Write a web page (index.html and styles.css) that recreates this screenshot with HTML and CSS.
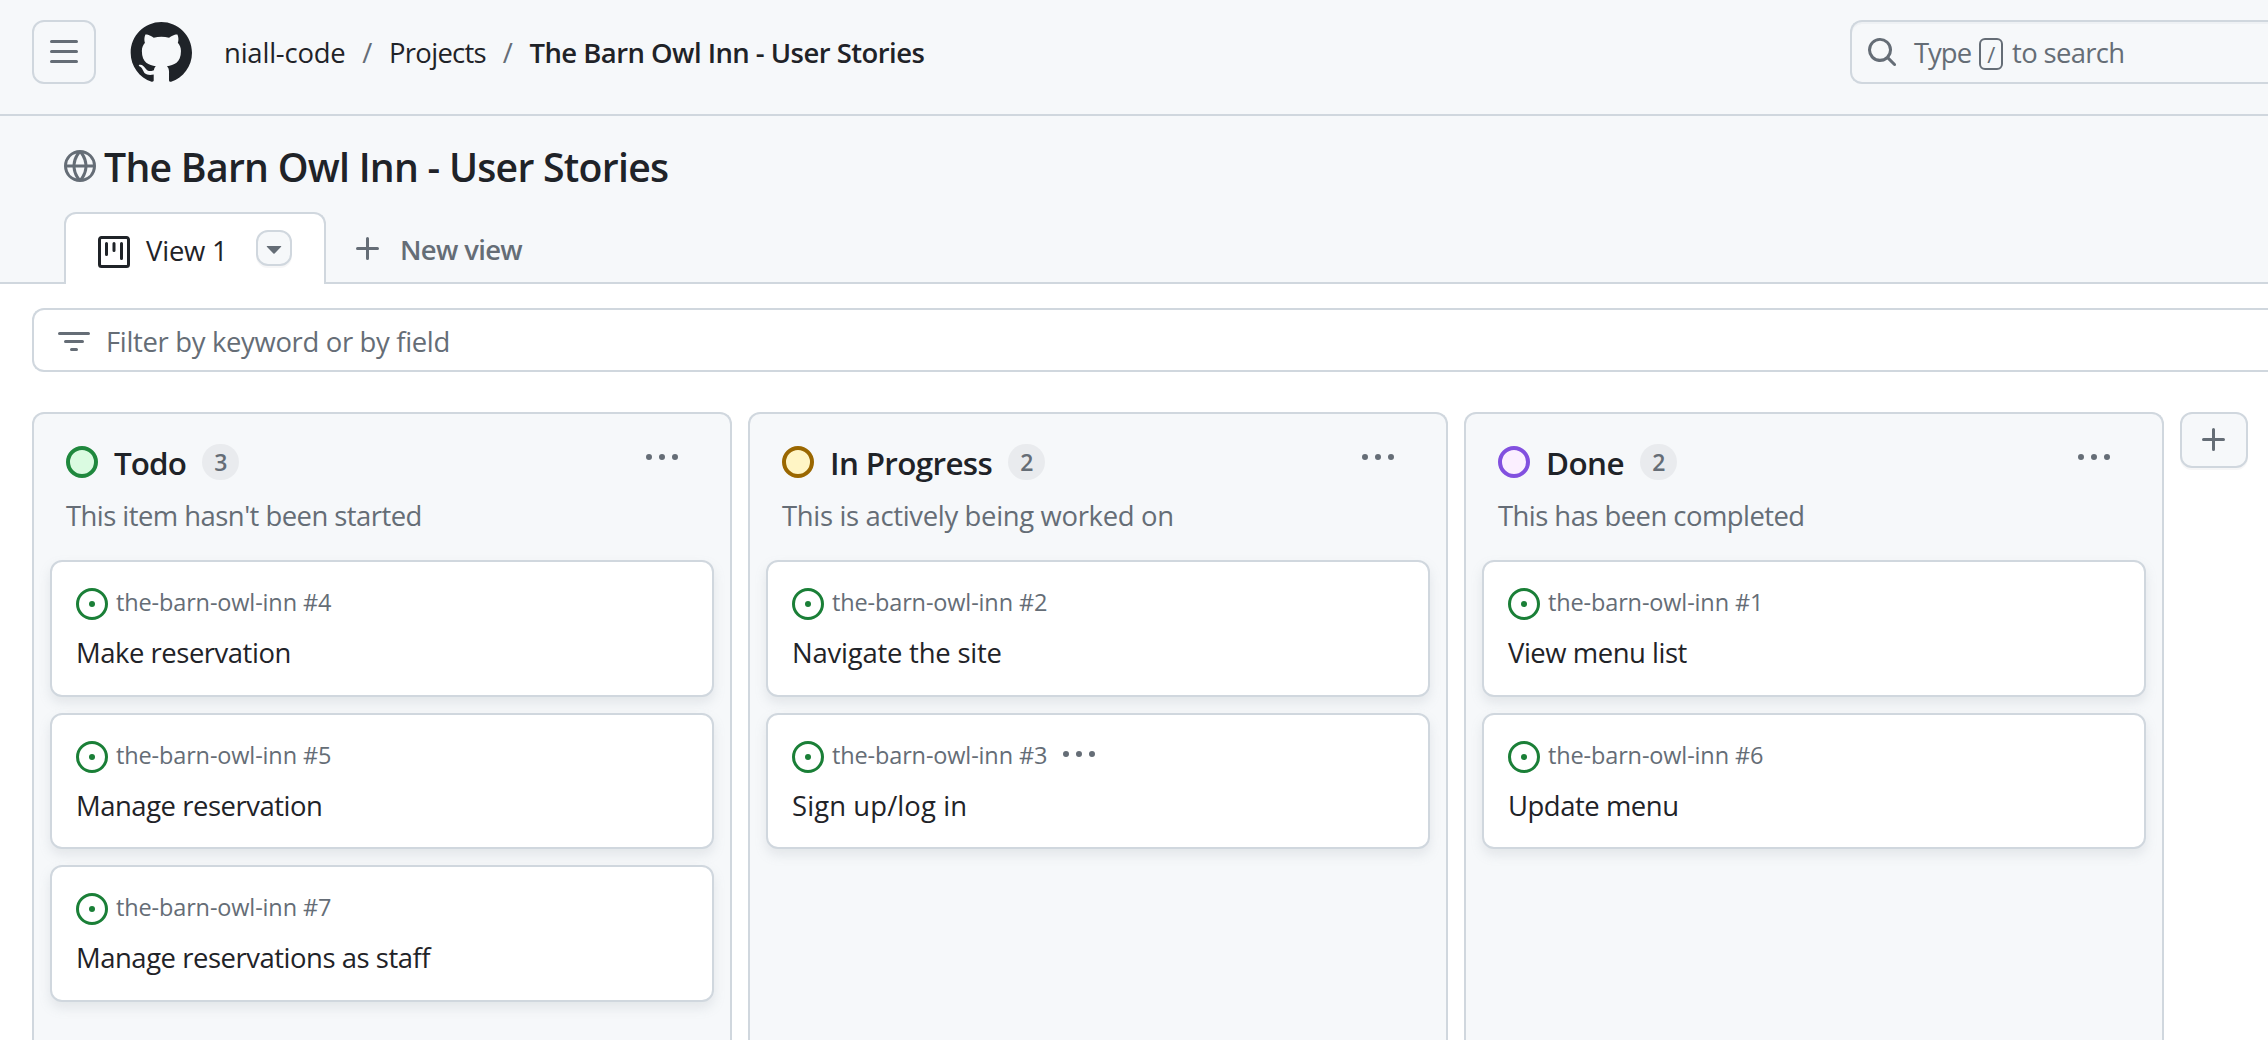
FILE: index.html
```html
<!DOCTYPE html>
<html lang="en">
<head>
<meta charset="utf-8">
<title>The Barn Owl Inn - User Stories</title>
<link rel="stylesheet" href="styles.css">
</head>
<body>
<svg class="sprite" aria-hidden="true">
  <symbol id="plus" viewBox="0 0 16 16"><path d="M7.75 2a.75.75 0 0 1 .75.75V7h4.25a.75.75 0 0 1 0 1.5H8.5v4.25a.75.75 0 0 1-1.5 0V8.5H2.75a.75.75 0 0 1 0-1.5H7V2.75A.75.75 0 0 1 7.75 2Z"/></symbol>
  <symbol id="kebab" viewBox="0 0 16 16"><path d="M8 9a1.5 1.5 0 1 0 0-3 1.5 1.5 0 0 0 0 3ZM1.5 9a1.5 1.5 0 1 0 0-3 1.5 1.5 0 0 0 0 3Zm13 0a1.5 1.5 0 1 0 0-3 1.5 1.5 0 0 0 0 3Z"/></symbol>
  <symbol id="issue" viewBox="0 0 16 16"><path d="M8 9.5a1.5 1.5 0 1 0 0-3 1.5 1.5 0 0 0 0 3Z"/><path d="M8 0a8 8 0 1 1 0 16A8 8 0 0 1 8 0ZM1.5 8a6.5 6.5 0 1 0 13 0 6.5 6.5 0 0 0-13 0Z"/></symbol>
</svg>

<header class="topbar">
  <button class="menu-button" aria-label="Menu"><svg class="icon" viewBox="0 0 16 16"><path d="M1 2.75A.75.75 0 0 1 1.75 2h12.5a.75.75 0 0 1 0 1.5H1.75A.75.75 0 0 1 1 2.75Zm0 5A.75.75 0 0 1 1.75 7h12.5a.75.75 0 0 1 0 1.5H1.75A.75.75 0 0 1 1 7.75ZM1.75 12h12.5a.75.75 0 0 1 0 1.5H1.75a.75.75 0 0 1 0-1.5Z"/></svg></button>
  <svg class="logo" viewBox="0 0 24 24"><path d="M12.5.75C6.146.75 1 5.896 1 12.25c0 5.089 3.292 9.387 7.863 10.91.575.101.79-.244.79-.546 0-.273-.014-1.178-.014-2.142-2.889.532-3.636-.704-3.866-1.35-.13-.331-.69-1.352-1.18-1.625-.402-.216-.977-.748-.014-.762.906-.014 1.553.834 1.769 1.179 1.035 1.74 2.688 1.25 3.349.948.1-.747.402-1.25.733-1.538-2.559-.287-5.232-1.279-5.232-5.678 0-1.25.445-2.285 1.178-3.09-.115-.288-.517-1.467.115-3.048 0 0 .963-.302 3.163 1.179.92-.259 1.897-.388 2.875-.388.977 0 1.955.13 2.875.388 2.2-1.495 3.162-1.179 3.162-1.179.633 1.581.23 2.76.115 3.048.733.805 1.179 1.825 1.179 3.09 0 4.413-2.688 5.39-5.247 5.678.417.36.776 1.05.776 2.128 0 1.538-.014 2.774-.014 3.162 0 .302.216.662.79.547C20.709 21.637 24 17.324 24 12.25 24 5.896 18.854.75 12.5.75Z"/></svg>
  <nav class="crumbs">
    <span class="owner">niall-code</span><span class="slash">/</span><span class="projects">Projects</span><span class="slash">/</span><strong class="current">The Barn Owl Inn - User Stories</strong>
  </nav>
  <div class="search">
    <svg class="icon" viewBox="0 0 16 16"><path d="M10.68 11.74a6 6 0 0 1-7.922-8.982 6 6 0 0 1 8.982 7.922l3.04 3.04a.749.749 0 0 1-.326 1.275.749.749 0 0 1-.734-.215ZM11.5 7a4.499 4.499 0 1 0-8.997 0A4.499 4.499 0 0 0 11.5 7Z"/></svg>
    <span class="search-type">Type</span><kbd class="key">/</kbd><span class="search-rest">to search</span>
  </div>
</header>

<section class="project-head">
  <div class="title-row">
    <svg class="icon" viewBox="0 0 16 16"><path d="M8 0a8 8 0 1 1 0 16A8 8 0 0 1 8 0ZM5.78 8.75a9.64 9.64 0 0 0 1.363 4.177c.255.426.542.832.857 1.215.245-.296.551-.705.857-1.215A9.64 9.64 0 0 0 10.22 8.75Zm4.44-1.5a9.64 9.64 0 0 0-1.363-4.177c-.307-.51-.612-.919-.857-1.215a9.927 9.927 0 0 0-.857 1.215A9.64 9.64 0 0 0 5.78 7.25Zm-5.944 1.5H1.543a6.507 6.507 0 0 0 4.666 5.5c-.123-.181-.24-.365-.352-.552-.715-1.192-1.437-2.874-1.581-4.948Zm-2.733-1.5h2.733c.144-2.074.866-3.756 1.58-4.948.12-.197.237-.381.353-.552a6.507 6.507 0 0 0-4.666 5.5Zm10.181 1.5c-.144 2.074-.866 3.756-1.58 4.948-.12.197-.237.381-.353.552a6.507 6.507 0 0 0 4.666-5.5Zm2.733-1.5a6.507 6.507 0 0 0-4.666-5.5c.123.181.24.365.353.552.714 1.192 1.436 2.874 1.58 4.948Z"/></svg>
    <h1>The Barn Owl Inn - User Stories</h1>
  </div>
  <div class="tabs">
    <div class="tab">
      <svg class="icon dark" viewBox="0 0 16 16"><path d="M1.75 0h12.5C15.216 0 16 .784 16 1.75v12.5A1.75 1.75 0 0 1 14.25 16H1.75A1.75 1.75 0 0 1 0 14.25V1.75C0 .784.784 0 1.75 0ZM1.5 1.75v12.5c0 .138.112.25.25.25h12.5a.25.25 0 0 0 .25-.25V1.75a.25.25 0 0 0-.25-.25H1.75a.25.25 0 0 0-.25.25ZM11.75 3a.75.75 0 0 1 .75.75v7.5a.75.75 0 0 1-1.5 0v-7.5a.75.75 0 0 1 .75-.75Zm-8.25.75a.75.75 0 0 1 1.5 0v5.5a.75.75 0 0 1-1.5 0ZM8 3a.75.75 0 0 1 .75.75v3.5a.75.75 0 0 1-1.5 0v-3.5A.75.75 0 0 1 8 3Z"/></svg>
      <span class="tab-name">View 1</span>
      <button class="tab-menu" aria-label="View options"><svg class="icon" viewBox="0 0 16 16"><path d="m4.427 7.427 3.396 3.396a.25.25 0 0 0 .354 0l3.396-3.396A.25.25 0 0 0 11.396 7H4.604a.25.25 0 0 0-.177.427Z"/></svg></button>
    </div>
    <div class="new-view"><svg class="icon"><use href="#plus"/></svg><span>New view</span></div>
  </div>
</section>

<div class="filter">
  <svg class="icon" viewBox="0 0 16 16"><path d="M.75 3h14.5a.75.75 0 0 1 0 1.5H.75a.75.75 0 0 1 0-1.5ZM3 7.75A.75.75 0 0 1 3.75 7h8.5a.75.75 0 0 1 0 1.5h-8.5A.75.75 0 0 1 3 7.75Zm3 4a.75.75 0 0 1 .75-.75h2.5a.75.75 0 0 1 0 1.5h-2.5a.75.75 0 0 1-.75-.75Z"/></svg>
  <span>Filter by keyword or by field</span>
</div>

<main class="board">
  <section class="column todo">
    <div class="column-head"><i class="dot"></i><h2>Todo</h2><span class="count">3</span><svg class="icon more"><use href="#kebab"/></svg></div>
    <p class="desc">This item hasn't been started</p>
    <article class="card"><div class="ref"><svg class="icon open"><use href="#issue"/></svg><span>the-barn-owl-inn #4</span></div><h3>Make reservation</h3></article>
    <article class="card"><div class="ref"><svg class="icon open"><use href="#issue"/></svg><span>the-barn-owl-inn #5</span></div><h3>Manage reservation</h3></article>
    <article class="card"><div class="ref"><svg class="icon open"><use href="#issue"/></svg><span>the-barn-owl-inn #7</span></div><h3>Manage reservations as staff</h3></article>
  </section>
  <section class="column progress">
    <div class="column-head"><i class="dot"></i><h2>In Progress</h2><span class="count">2</span><svg class="icon more"><use href="#kebab"/></svg></div>
    <p class="desc">This is actively being worked on</p>
    <article class="card"><div class="ref"><svg class="icon open"><use href="#issue"/></svg><span>the-barn-owl-inn #2</span></div><h3 class="loose">Navigate the site</h3></article>
    <article class="card"><div class="ref"><svg class="icon open"><use href="#issue"/></svg><span>the-barn-owl-inn #3</span><svg class="icon card-more"><use href="#kebab"/></svg></div><h3 class="looser">Sign up/log in</h3></article>
  </section>
  <section class="column done">
    <div class="column-head"><i class="dot"></i><h2>Done</h2><span class="count">2</span><svg class="icon more"><use href="#kebab"/></svg></div>
    <p class="desc">This has been completed</p>
    <article class="card"><div class="ref"><svg class="icon open"><use href="#issue"/></svg><span>the-barn-owl-inn #1</span></div><h3>View menu list</h3></article>
    <article class="card"><div class="ref"><svg class="icon open"><use href="#issue"/></svg><span>the-barn-owl-inn #6</span></div><h3>Update menu</h3></article>
  </section>
  <button class="add-column" aria-label="Add column"><svg class="icon"><use href="#plus"/></svg></button>
</main>
</body>
</html>
```
FILE: styles.css
```css
* { box-sizing: border-box; }
html, body { height: 100%; }
html { overflow: hidden; }
body {
  margin: 0;
  display: flex;
  flex-direction: column;
  overflow: hidden;
  background: #fff;
  color: #1f2328;
  font: 400 27.44px/40px "Open Sans", "Noto Sans", sans-serif;
  letter-spacing: -0.5px;
  white-space: nowrap;
}
h1, h2, h3, p { margin: 0; font-weight: 400; }
button { padding: 0; font: inherit; }
.sprite { display: none; }
.icon { width: 32px; height: 32px; flex: none; display: block; fill: #656d76; }
.icon.dark { fill: #1f2328; }
.icon.open { fill: #1a7f37; }

.topbar {
  flex: none;
  display: flex;
  align-items: flex-start;
  height: 116px;
  padding: 20px 0 0 32px;
  background: #f6f8fa;
  border-bottom: 2px solid #d0d7de;
}
.menu-button {
  display: grid;
  place-items: center;
  width: 64px;
  height: 64px;
  border: 2px solid #d0d7de;
  border-radius: 12px;
  background: transparent;
}
.logo { width: 64px; height: 64px; margin-left: 32px; fill: #1f2328; }
.crumbs { display: flex; align-items: center; height: 64px; margin-left: 32px; padding-top: 2px; }
.slash { width: 43.5px; text-align: center; color: #656d76; letter-spacing: 0; }
.owner { letter-spacing: -0.2px; }
.projects { letter-spacing: -0.7px; }
.current { font-weight: 600; letter-spacing: -0.53px; }
.search {
  flex: none;
  display: flex;
  align-items: center;
  width: 418px;
  height: 64px;
  margin-left: auto;
  padding-left: 14px;
  border: 2px solid #d0d7de;
  border-right: 0;
  border-radius: 12px 0 0 12px;
  box-shadow: inset 0 2px 0 rgba(208, 215, 222, .2);
  color: #656d76;
}
.search-type { margin: 2px 0 0 16px; letter-spacing: -1px; }
.key {
  display: flex;
  align-items: center;
  justify-content: center;
  width: 24px;
  height: 32px;
  margin: 4px 9px 0 8px;
  border: 2px solid #656d76;
  border-radius: 6px;
  font: 400 22px/28px "Open Sans", sans-serif;
}
.search-rest { margin-top: 2px; letter-spacing: -0.65px; }

.project-head {
  flex: none;
  height: 168px;
  padding: 30px 64px 0;
  background: #f6f8fa;
  border-bottom: 2px solid #d0d7de;
}
.title-row { display: flex; align-items: center; gap: 8px; height: 40px; }
h1 { font-weight: 600; font-size: 39.2px; letter-spacing: -0.74px; margin-top: 2px; }
.tabs { display: flex; margin-top: 26px; }
.tab {
  display: flex;
  align-items: center;
  width: 262px;
  height: 72px;
  padding: 4px 0 0 32px;
  border: 2px solid #d0d7de;
  border-bottom: 0;
  border-radius: 12px 12px 0 0;
  background: #fff;
}
.icon.dark { margin-top: 2px; }
.tab-name { width: 110px; margin-left: 16px; letter-spacing: -0.2px; }
.tab-menu {
  display: grid;
  place-items: center;
  width: 36px;
  height: 36px;
  margin-top: -6px;
  border: 2px solid #d0d7de;
  border-radius: 12px;
  background: #f6f8fa;
  box-shadow: 0 2px 0 rgba(31, 35, 40, .04);
}
.new-view {
  display: flex;
  align-items: center;
  gap: 16px;
  height: 74px;
  margin-left: 26px;
  font-weight: 600;
  color: #656d76;
  letter-spacing: -0.65px;
}
.new-view span { margin-top: 2px; }

.filter {
  flex: none;
  display: flex;
  align-items: center;
  gap: 16px;
  height: 64px;
  margin: 24px 0 0 32px;
  padding-left: 24px;
  border: 2px solid #d0d7de;
  border-right: 0;
  border-radius: 12px 0 0 12px;
  color: #656d76;
  letter-spacing: -0.33px;
}
.filter .icon { margin-top: 3px; }
.filter span { margin-top: 3px; }

.board { flex: 1; display: flex; gap: 16px; padding: 40px 0 0 32px; min-height: 0; }
.column {
  flex: none;
  width: 700px;
  padding: 30px 16px 0;
  border: 2px solid #d0d7de;
  border-bottom: 0;
  border-radius: 12px 12px 0 0;
  background: #f6f8fa;
}
.column-head { display: flex; align-items: center; height: 36px; padding: 0 36px 0 16px; }
.dot { width: 32px; height: 32px; border: 4px solid; border-radius: 50%; }
.todo .dot { color: #1f883d; background: #dafbe1; }
.progress .dot { color: #9a6700; background: #fff5c5; }
.done .dot { color: #8250df; background: #fbefff; }
h2 { margin: 2px 0 0 16px; font-weight: 600; font-size: 31.4px; letter-spacing: -0.9px; }
.progress h2 { letter-spacing: -0.65px; }
.done h2 { letter-spacing: -0.55px; }
.count {
  width: 37px;
  height: 36px;
  margin-left: 16px;
  border-radius: 18px;
  background: #e9ebee;
  color: #656d76;
  font-size: 23px;
  font-weight: 600;
  line-height: 37px;
  text-align: center;
}
.more { margin: -8px 0 0 auto; }
.desc { margin: 16px 0 24px 16px; color: #656d76; letter-spacing: -0.54px; }
.progress .desc { letter-spacing: -0.33px; }
.card {
  height: 136.5px;
  margin-bottom: 16px;
  padding: 26px 24px 0;
  border: 2px solid #d0d7de;
  border-radius: 12px;
  background: #fff;
  box-shadow: 0 6px 12px rgba(140, 149, 159, .18);
}
.ref { display: flex; align-items: center; height: 32px; font-size: 23.5px; color: #656d76; letter-spacing: -0.14px; }
.ref span { margin: -4px 0 0 8px; }
.card-more { margin: -4px 0 0 16px; }
h3 { margin-top: 13px; font-size: 27.44px; letter-spacing: -0.46px; }
h3.loose { letter-spacing: -0.21px; }
h3.looser { letter-spacing: 0.1px; }
.add-column {
  flex: none;
  display: grid;
  place-items: center;
  width: 68px;
  height: 56px;
  border: 2px solid #d0d7de;
  border-radius: 12px;
  background: #f6f8fa;
  box-shadow: 0 2px 0 rgba(31, 35, 40, .04);
}
```
